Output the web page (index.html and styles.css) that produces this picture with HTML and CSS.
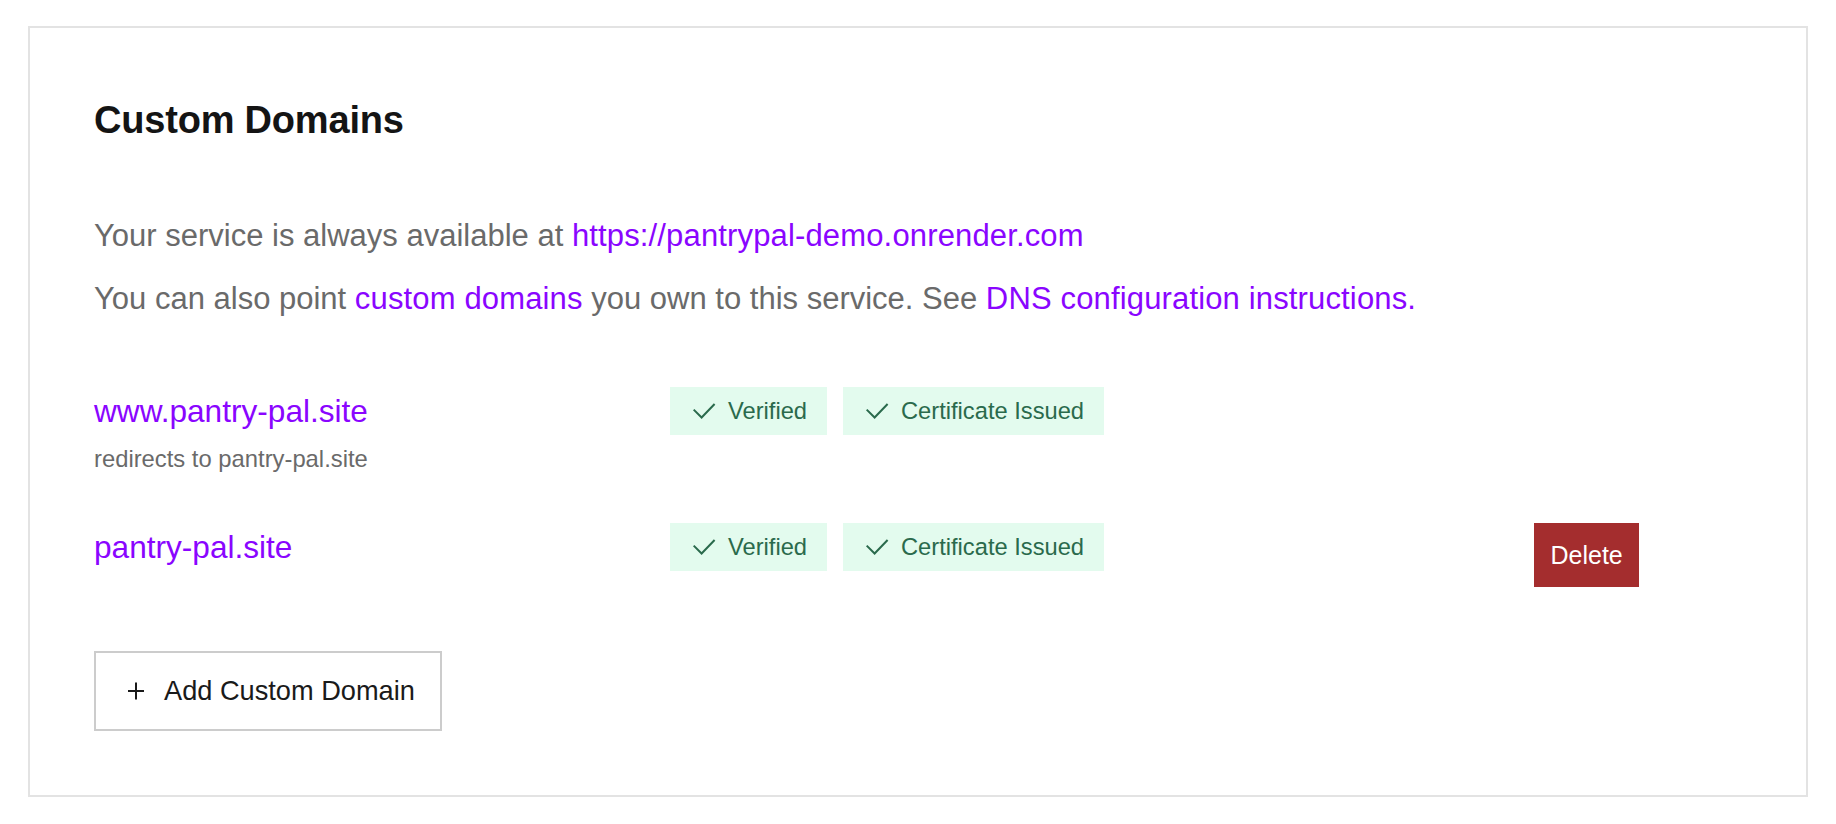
FILE: index.html
```html
<!DOCTYPE html>
<html lang="en">
<head>
<meta charset="utf-8">
<title>Custom Domains</title>
<link rel="stylesheet" href="styles.css">
</head>
<body>
<div class="page">
  <section class="card">
    <h2 class="title">Custom Domains</h2>
    <div class="intro">
      <p class="text">Your service is always available at <a class="link" href="#">https://pantrypal-demo.onrender.com</a></p>
      <p class="text">You can also point <a class="link" href="#">custom domains</a> you own to this service. See <a class="link" href="#">DNS configuration instructions.</a></p>
    </div>
    <div class="domains">
      <div class="domain-row">
        <div class="domain-info">
          <a class="domain-name" href="#">www.pantry-pal.site</a>
          <div class="domain-sub">redirects to pantry-pal.site</div>
        </div>
        <div class="badges">
          <span class="badge"><svg class="check" width="24" height="24" viewBox="0 0 24 24"><path d="M1.7 10.6 L9.6 18.5 L22.6 5" fill="none" stroke="currentColor" stroke-width="2"/></svg>Verified</span>
          <span class="badge"><svg class="check" width="24" height="24" viewBox="0 0 24 24"><path d="M1.7 10.6 L9.6 18.5 L22.6 5" fill="none" stroke="currentColor" stroke-width="2"/></svg>Certificate Issued</span>
        </div>
        <div class="actions"></div>
      </div>
      <div class="domain-row">
        <div class="domain-info">
          <a class="domain-name" href="#">pantry-pal.site</a>
        </div>
        <div class="badges">
          <span class="badge"><svg class="check" width="24" height="24" viewBox="0 0 24 24"><path d="M1.7 10.6 L9.6 18.5 L22.6 5" fill="none" stroke="currentColor" stroke-width="2"/></svg>Verified</span>
          <span class="badge"><svg class="check" width="24" height="24" viewBox="0 0 24 24"><path d="M1.7 10.6 L9.6 18.5 L22.6 5" fill="none" stroke="currentColor" stroke-width="2"/></svg>Certificate Issued</span>
        </div>
        <div class="actions">
          <button class="btn-delete" type="button">Delete</button>
        </div>
      </div>
    </div>
    <button class="btn-add" type="button"><svg class="plus" width="16" height="18" viewBox="0 0 16 18"><path d="M8 0.5 V17.5 M0 9 H16" fill="none" stroke="currentColor" stroke-width="2"/></svg>Add Custom Domain</button>
  </section>
</div>
</body>
</html>
```

FILE: styles.css
```css
* { box-sizing: border-box; }

html, body {
  margin: 0;
  padding: 0;
  background: #ffffff;
}

body {
  font-family: "Liberation Sans", Arial, sans-serif;
  color: #141414;
}

.page {
  padding: 26px 28px 26px 28px;
}

.card {
  border: 2px solid #e3e3e3;
  padding: 64px 64px 64px 64px;
  display: flex;
  flex-direction: column;
  align-items: flex-start;
}

.title {
  margin: 0 0 64px 0;
  font-size: 38px;
  line-height: 57px;
  font-weight: 700;
  color: #141414;
  letter-spacing: -0.2px;
}

.intro {
  display: flex;
  flex-direction: column;
  gap: 16.5px;
  margin-bottom: 64.5px;
}

.text {
  margin: 0;
  font-size: 31px;
  line-height: 46.5px;
  color: #6a6a6a;
}

.link {
  color: #8a05ff;
  text-decoration: none;
  letter-spacing: 0.15px;
}

.domains {
  display: flex;
  flex-direction: column;
  gap: 46px;
  width: 100%;
}

.domain-row {
  display: grid;
  grid-template-columns: 576px 864px 1fr;
  align-items: start;
}

.domain-info {
  display: flex;
  flex-direction: column;
}

.domain-name {
  font-size: 31.6px;
  line-height: 48px;
  color: #8a05ff;
  text-decoration: none;
}

.domain-sub {
  margin-top: 6px;
  font-size: 23.8px;
  line-height: 36px;
  color: #6a6a6a;
}

.badges {
  display: flex;
  gap: 16px;
}

.badge {
  display: inline-flex;
  align-items: center;
  height: 48px;
  padding: 0 20px 0 22px;
  background: #e3fbee;
  color: #2a6a4c;
  font-size: 23.7px;
  line-height: 48px;
}

.check {
  display: block;
  margin-right: 12px;
  flex: none;
}

.btn-delete {
  display: block;
  height: 64px;
  padding: 0 16.5px;
  border: none;
  border-radius: 0;
  background: #a42d2e;
  color: #ffffff;
  font-family: "Liberation Sans", Arial, sans-serif;
  font-size: 25px;
  line-height: 64px;
  cursor: pointer;
}

.btn-add {
  display: inline-flex;
  align-items: center;
  margin-top: 64px;
  height: 80px;
  padding: 0 25px 0 32px;
  border: 2px solid #cccccc;
  border-radius: 0;
  background: #ffffff;
  color: #1a1a1a;
  font-family: "Liberation Sans", Arial, sans-serif;
  font-size: 27.2px;
  line-height: 76px;
  cursor: pointer;
}

.plus {
  display: block;
  margin-right: 20px;
  flex: none;
}
```
